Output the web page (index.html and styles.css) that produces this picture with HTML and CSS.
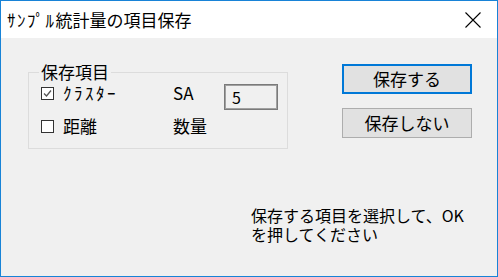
FILE: index.html
```html
<!DOCTYPE html>
<html lang="ja">
<head>
    <meta charset="UTF-8">
    <title>ｻﾝﾌﾟﾙ統計量の項目保存</title>
    <link rel="stylesheet" href="styles.css">
</head>
<body>
    <div class="window">
        <!-- Title bar -->
        <div class="titlebar">
            <span class="title"><span class="hankaku">ｻﾝﾌﾟﾙ</span>統計量の項目保存</span>
            <span class="close">
                <svg width="16" height="16" viewBox="0 0 16 16">
                    <path d="M0.5 0.5 L15.5 15.5 M15.5 0.5 L0.5 15.5" stroke="#000" stroke-width="1.1" fill="none"/>
                </svg>
            </span>
        </div>

        <div class="client">
            <div class="top-row">
                <fieldset class="group">
                    <legend>保存項目</legend>
                    <div class="group-grid">
                        <label class="check">
                            <span class="box checked">
                                <svg width="9" height="9" viewBox="0 0 9 9">
                                    <path d="M1 4.5 L3.5 7 L8 1.5" stroke="#555" stroke-width="1.3" fill="none"/>
                                </svg>
                            </span>
                            <span class="hankaku wide">ｸﾗｽﾀｰ</span>
                        </label>
                        <span class="field-label">SA</span>
                        <span class="edit">5</span>

                        <label class="check">
                            <span class="box"></span>
                            距離
                        </label>
                        <span class="field-label">数量</span>
                        <span></span>
                    </div>
                </fieldset>

                <div class="buttons">
                    <div class="button default">保存する</div>
                    <div class="button">保存しない</div>
                </div>
            </div>

            <p class="message">保存する項目を選択して、OK<br>を押してください</p>
        </div>
    </div>
</body>
</html>
```

FILE: styles.css
```css
body {
    margin: 0;
    padding: 0;
    font-family: "Noto Sans CJK JP", "Noto Sans", sans-serif;
    font-size: 17px;
    color: #000;
}

/* Dialog window */
.window {
    width: 498px;
    height: 277px;
    box-sizing: border-box;
    border: 1px solid #1883d7;
    background-color: #f0f0f0;
    display: flex;
    flex-direction: column;
}

.titlebar {
    height: 37px;
    flex: none;
    background-color: #fff;
    display: flex;
    align-items: center;
    justify-content: space-between;
    padding-left: 6px;
}

.title {
    font-size: 17px;
    line-height: 20px;
}

/* half-width katakana is drawn wider in the original font */
.hankaku {
    letter-spacing: 1.5px;
}

.hankaku.wide {
    letter-spacing: 2.5px;
}

.close {
    width: 46px;
    height: 37px;
    display: flex;
    align-items: center;
    justify-content: center;
    margin-right: 1px;
}

.client {
    flex: 1;
    padding-top: 25px;
}

.top-row {
    display: flex;
    align-items: flex-start;
}

/* Group box */
.group {
    margin: 0 0 0 27px;
    padding: 3px 0 5px 12px;
    width: 260px;
    box-sizing: border-box;
    border: 1px solid #dcdcdc;
    min-width: 0;
}

.group legend {
    padding: 0 2px;
    margin-left: -2px;
    line-height: 18px;
}

.group-grid {
    display: grid;
    grid-template-columns: 132px 51px 54px;
    grid-template-rows: 26px 26px;
    row-gap: 7px;
    align-items: start;
}

.check {
    display: flex;
    align-items: center;
    line-height: 18px;
}

.box {
    width: 11px;
    height: 11px;
    border: 1px solid #333;
    background-color: #fff;
    margin-right: 9px;
    display: flex;
    align-items: center;
    justify-content: center;
}

.field-label {
    line-height: 18px;
}

.edit {
    height: 26px;
    box-sizing: border-box;
    border: 1px solid #7a7a7a;
    box-shadow: inset 0 0 0 1px #a0a0a0;
    background-color: #f0f0f0;
    padding-left: 7px;
    line-height: 24px;
    font-size: 16px;
}

/* Buttons */
.buttons {
    margin-left: 54px;
    margin-top: 1px;
    display: flex;
    flex-direction: column;
    gap: 14px;
}

.button {
    width: 130px;
    height: 30px;
    box-sizing: border-box;
    border: 1px solid #adadad;
    background-color: #e1e1e1;
    display: flex;
    align-items: center;
    justify-content: center;
    line-height: 18px;
}

.button.default {
    border: 2px solid #0078d7;
}

.message {
    margin: 57px 0 0 250px;
    font-size: 16px;
    line-height: 19px;
}
```
